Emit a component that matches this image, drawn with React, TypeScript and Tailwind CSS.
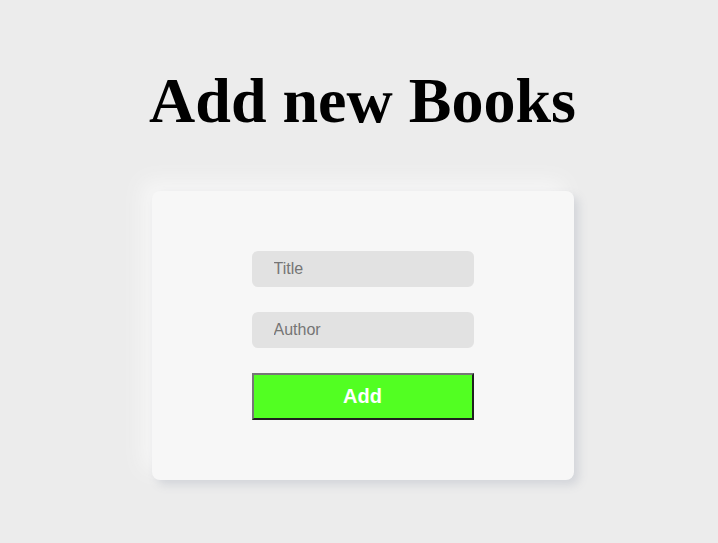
import React from "react";

export default function App() {
  return (
    <div className="min-h-[543px] w-full bg-[#ececec] pl-[7px] flex flex-col items-center font-['Liberation_Sans',Arial,sans-serif]">
      <h1 className="mt-[65px] text-[64px] leading-[71px] font-bold text-black font-['Liberation_Serif','Times_New_Roman',serif]">
        Add new Books
      </h1>
      <div className="mt-[55px] w-[422px] rounded-lg bg-[#f7f7f7] px-[100px] py-[60px] flex flex-col gap-[25px] shadow-[5px_5px_10px_#d3d5da,-10px_-10px_20px_#f6f6f6]">
        <input
          placeholder="Title"
          className="h-9 w-[222px] rounded-md bg-[#e2e2e2] pl-[22px] text-base text-black placeholder:text-[#757575] outline-none"
        />
        <input
          placeholder="Author"
          className="h-9 w-[222px] rounded-md bg-[#e2e2e2] pl-[22px] text-base text-black placeholder:text-[#757575] outline-none"
        />
        <button className="h-[47px] w-[222px] pb-[2px] bg-[#52ff22] border-2 border-t-[#767676] border-l-[#767676] border-r-[#1f1f1f] border-b-[#1f1f1f] text-white text-[20px] font-bold">
          Add
        </button>
      </div>
    </div>
  );
}
